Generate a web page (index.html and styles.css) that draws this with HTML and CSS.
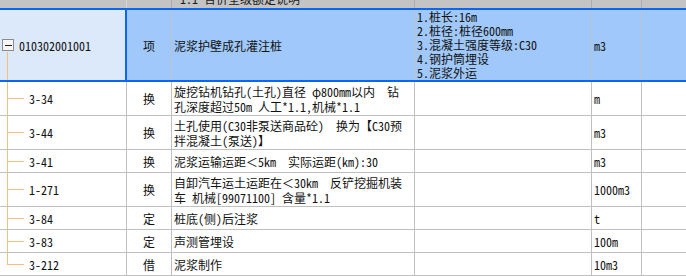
FILE: index.html
```html
<!DOCTYPE html>
<html lang="zh-CN">
<head>
<meta charset="utf-8">
<title>清单定额</title>
<link rel="stylesheet" href="styles.css">
</head>
<body>
<div class="grid">
  <div class="row head">
    <div class="c c1"></div>
    <div class="c c2"></div>
    <div class="c c3"><span class="htext">1.1 合价全级额定说明</span></div>
    <div class="c c4"></div>
    <div class="c c5"></div>
    <div class="c c6"></div>
  </div>

  <div class="row sel">
    <div class="c c1"><span class="tog"></span><span>010302001001</span></div>
    <div class="c c2">项</div>
    <div class="c c3">泥浆护壁成孔灌注桩</div>
    <div class="c c4 feat">1.桩长:16m<br>2.桩径:桩径600mm<br>3.混凝土强度等级:C30<br>4.钢护筒埋设<br>5.泥浆外运</div>
    <div class="c c5">m3</div>
    <div class="c c6"></div>
  </div>

  <div class="row dbl">
    <div class="c c1 tree">3-34</div>
    <div class="c c2">换</div>
    <div class="c c3 multi">旋挖钻机钻孔(土孔)直径 φ800mm以内  钻<br>孔深度超过50m 人工*1.1,机械*1.1</div>
    <div class="c c4"></div>
    <div class="c c5">m</div>
    <div class="c c6"></div>
  </div>

  <div class="row dbl">
    <div class="c c1 tree">3-44</div>
    <div class="c c2">换</div>
    <div class="c c3 multi">土孔使用(C30非泵送商品砼)  换为【C30预<br>拌混凝土(泵送)】</div>
    <div class="c c4"></div>
    <div class="c c5">m3</div>
    <div class="c c6"></div>
  </div>

  <div class="row sgl">
    <div class="c c1 tree">3-41</div>
    <div class="c c2">换</div>
    <div class="c c3">泥浆运输运距＜5km  实际运距(km):30</div>
    <div class="c c4"></div>
    <div class="c c5">m3</div>
    <div class="c c6"></div>
  </div>

  <div class="row dbl">
    <div class="c c1 tree">1-271</div>
    <div class="c c2">换</div>
    <div class="c c3 multi">自卸汽车运土运距在＜30km  反铲挖掘机装<br>车 机械[99071100] 含量*1.1</div>
    <div class="c c4"></div>
    <div class="c c5">1000m3</div>
    <div class="c c6"></div>
  </div>

  <div class="row sgl">
    <div class="c c1 tree">3-84</div>
    <div class="c c2">定</div>
    <div class="c c3">桩底(侧)后注浆</div>
    <div class="c c4"></div>
    <div class="c c5">t</div>
    <div class="c c6"></div>
  </div>

  <div class="row sgl">
    <div class="c c1 tree">3-83</div>
    <div class="c c2">定</div>
    <div class="c c3">声测管埋设</div>
    <div class="c c4"></div>
    <div class="c c5">100m</div>
    <div class="c c6"></div>
  </div>

  <div class="row sgl">
    <div class="c c1 tree last">3-212</div>
    <div class="c c2">借</div>
    <div class="c c3">泥浆制作</div>
    <div class="c c4"></div>
    <div class="c c5">10m3</div>
    <div class="c c6"></div>
  </div>
</div>
</body>
</html>
```

FILE: styles.css
```css
* { box-sizing: border-box; }

html, body {
  margin: 0;
  padding: 0;
  background: #ffffff;
}

body {
  width: 686px;
  height: 276px;
  overflow: hidden;
  font-family: "Noto Sans Mono CJK SC", "Noto Sans CJK SC", sans-serif;
  font-size: 12px;
  color: #111;
}

.grid {
  display: flex;
  flex-direction: column;
}

.row {
  display: grid;
  grid-template-columns: 127px 45px 243px 177px 50px 1fr;
  border-bottom: 1px solid #c0c0c0;
}

.c {
  display: flex;
  align-items: center;
  padding-left: 2px;
  border-right: 1px solid #c0c0c0;
  white-space: pre;
  overflow: hidden;
  line-height: 15px;
}

.c6 { border-right: none; }

.c2 {
  justify-content: center;
  padding-left: 0;
}

/* header strip (clipped) */
.head {
  height: 8px;
  background: #c4c4c4;
  border-bottom: none;
}
.head .c {
  align-items: flex-end;
  border-right-color: #adadad;
}
.head .c1 { border-right-color: #d6d6d6; }
.head .c3 { padding-left: 8px; }
.htext {
  line-height: 12px;
  margin-bottom: 3px;
  color: #1a1a1a;
}

/* selected bill row */
.sel {
  height: 74px;
  border-top: 2px solid #0b66f3;
  border-bottom: 2px solid #0b66f3;
  background: #a0c8fa;
}
.sel .c { border-right-color: #b9c3d3; }
.sel .c1 {
  background-color: #dce9fb;
  background-image: linear-gradient(#f5bf78, #f5bf78);
  background-repeat: no-repeat;
  background-position: 7px 100%;
  background-size: 1px 28px;
  border-right: 2px solid #0b66f3;
  gap: 5px;
}
.sel .c6 { border-right: none; }

.feat { line-height: 14px; }

.tog {
  width: 12px;
  height: 12px;
  flex: none;
  border: 1px solid #8c8c8c;
  background: #f6f6f6 linear-gradient(#222, #222) no-repeat center / 7px 1px;
}

/* child rows */
.dbl { height: 34px; }
.sgl { height: 23px; }

.tree {
  margin-left: 7px;
  padding-left: 21px;
  border-left: 1px solid #f5bf78;
  background: linear-gradient(#f5bf78, #f5bf78) no-repeat 0 50% / 16px 1px;
}
.tree.last {
  border-left: none;
  padding-left: 22px;
  background:
    linear-gradient(#f5bf78, #f5bf78) no-repeat 0 0 / 1px 50%,
    linear-gradient(#f5bf78, #f5bf78) no-repeat 0 50% / 17px 1px;
}

.multi { line-height: 15px; }
```
